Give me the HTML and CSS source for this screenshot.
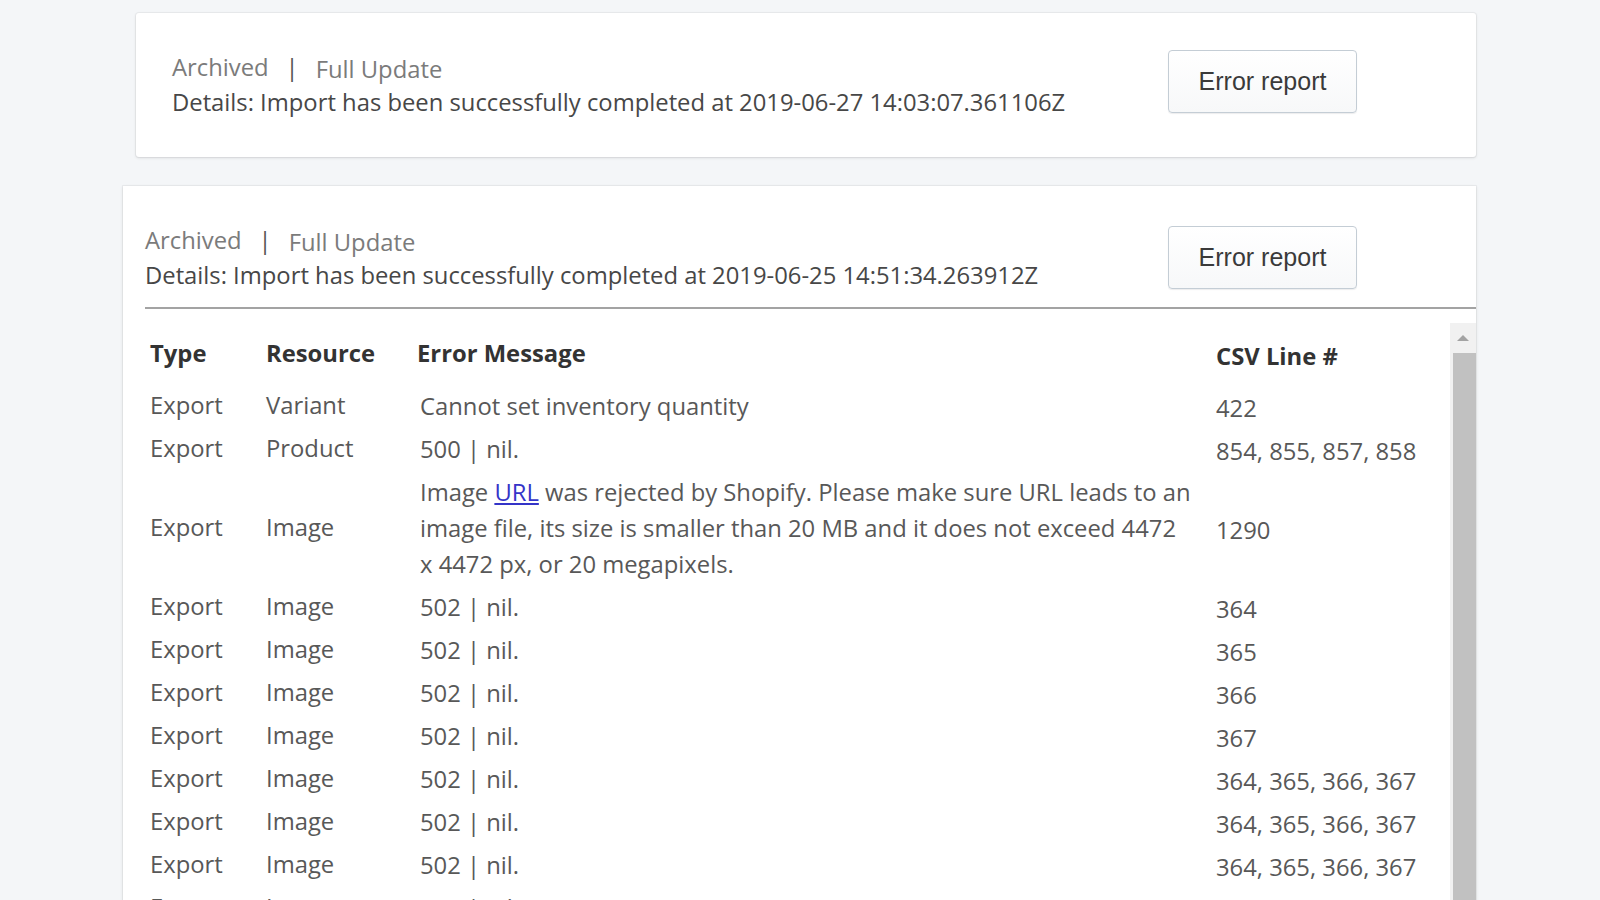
FILE: index.html
```html
<!DOCTYPE html>
<html lang="en">
<head>
<meta charset="utf-8">
<title>Import history</title>
<link rel="stylesheet" href="styles.css">
</head>
<body>
<div class="page">
  <section class="card card-first">
    <div class="summary-text">
      <div class="meta"><span>Archived</span><span class="sep">|</span><span class="meta-type">Full Update</span></div>
      <div class="details">Details: Import has been successfully completed at 2019-06-27 14:03:07.361106Z</div>
    </div>
    <button class="btn">Error report</button>
  </section>

  <section class="card card-second">
    <div class="summary">
      <div class="summary-text">
        <div class="meta"><span>Archived</span><span class="sep">|</span><span class="meta-type">Full Update</span></div>
        <div class="details">Details: Import has been successfully completed at 2019-06-25 14:51:34.263912Z</div>
      </div>
      <button class="btn btn-second">Error report</button>
    </div>
    <div class="divider"></div>
    <div class="scroll">
      <div class="table-wrap">
        <table class="errors">
          <colgroup>
            <col class="c-type"><col class="c-res"><col class="c-msg"><col class="c-csv">
          </colgroup>
          <thead>
            <tr><th>Type</th><th>Resource</th><th>Error Message</th><th class="csv">CSV Line #</th></tr>
          </thead>
          <tbody>
            <tr><td>Export</td><td>Variant</td><td class="msg">Cannot set inventory quantity</td><td class="csv">422</td></tr>
            <tr><td>Export</td><td>Product</td><td class="msg">500 | nil.</td><td class="csv">854, 855, 857, 858</td></tr>
            <tr><td>Export</td><td>Image</td><td class="msg">Image <a href="#">URL</a> was rejected by Shopify. Please make sure URL leads to an<br>image file, its size is smaller than 20 MB and it does not exceed 4472<br>x 4472 px, or 20 megapixels.</td><td class="csv">1290</td></tr>
            <tr><td>Export</td><td>Image</td><td class="msg">502 | nil.</td><td class="csv">364</td></tr>
            <tr><td>Export</td><td>Image</td><td class="msg">502 | nil.</td><td class="csv">365</td></tr>
            <tr><td>Export</td><td>Image</td><td class="msg">502 | nil.</td><td class="csv">366</td></tr>
            <tr><td>Export</td><td>Image</td><td class="msg">502 | nil.</td><td class="csv">367</td></tr>
            <tr><td>Export</td><td>Image</td><td class="msg">502 | nil.</td><td class="csv">364, 365, 366, 367</td></tr>
            <tr><td>Export</td><td>Image</td><td class="msg">502 | nil.</td><td class="csv">364, 365, 366, 367</td></tr>
            <tr><td>Export</td><td>Image</td><td class="msg">502 | nil.</td><td class="csv">364, 365, 366, 367</td></tr>
            <tr><td>Export</td><td>Image</td><td class="msg">502 | nil.</td><td class="csv">364, 365, 366, 367</td></tr>
            <tr><td>Export</td><td>Image</td><td class="msg">502 | nil.</td><td class="csv">364, 365, 366, 367</td></tr>
          </tbody>
        </table>
      </div>
      <div class="scrollbar">
        <div class="sb-up"><span class="sb-arrow"></span></div>
        <div class="sb-thumb"></div>
      </div>
    </div>
  </section>
</div>
</body>
</html>
```

FILE: styles.css
```css
html, body {
  margin: 0;
  padding: 0;
  height: 100%;
  overflow: hidden;
}

body {
  background: #f4f6f8;
  font-family: "Open Sans", "Noto Sans", sans-serif;
  font-size: 23.8px;
  color: #474747;
}

.page {
  padding-top: 13px;
}

.card {
  background: #ffffff;
  border-radius: 3px;
  box-shadow: 0 0 0 1px rgba(63, 63, 68, 0.05), 0 1px 3px 0 rgba(63, 63, 68, 0.15);
  box-sizing: border-box;
}

.card-first {
  margin-left: 136px;
  width: 1340px;
  height: 144px;
  padding: 37px 119px 0 36px;
  display: flex;
  justify-content: space-between;
  align-items: flex-start;
}

.card-second {
  margin-top: 29px;
  margin-left: 123px;
  width: 1353px;
  height: 760px;
  padding-top: 37px;
  border-radius: 0;
}

.summary {
  display: flex;
  justify-content: space-between;
  align-items: flex-start;
  padding-left: 22px;
  padding-right: 119px;
}

.summary-text {
  line-height: 35px;
  white-space: nowrap;
}

.meta {
  color: #7b7b7b;
}

.sep {
  margin: 0 17px;
  color: #555;
}

.meta-type {
  position: relative;
  top: 2px;
}

.details {
  color: #474747;
}

.btn {
  width: 189px;
  height: 63px;
  box-sizing: border-box;
  border: 1px solid #c4cdd5;
  border-radius: 4px;
  background: linear-gradient(#ffffff, #f7f8f9);
  box-shadow: 0 1px 1px rgba(22, 29, 37, 0.08);
  font-family: "Liberation Sans", Arial, sans-serif;
  font-size: 25px;
  color: #3a3a3a;
  padding: 0;
  flex-shrink: 0;
}

.btn-second {
  margin-top: 3px;
}

.divider {
  margin: 14px 0 0 22px;
  height: 2px;
  background: #a3a3a3;
}

.scroll {
  margin: 14px 0 0 22px;
  height: 600px;
  display: flex;
}

.table-wrap {
  flex: 1;
  overflow: hidden;
}

.errors {
  width: 1305px;
  table-layout: fixed;
  border-collapse: collapse;
  line-height: 36px;
}

.c-type { width: 116px; }
.c-res { width: 151px; }
.c-msg { width: 799px; }
.c-csv { width: 239px; }

.errors th {
  text-align: left;
  font-weight: 700;
  color: #333333;
  padding: 12px 0 13px 5px;
  vertical-align: middle;
}

.errors th.csv {
  padding-top: 15px;
  padding-bottom: 10px;
}

.errors td {
  color: #585858;
  padding: 3px 0 4px 5px;
  vertical-align: middle;
  white-space: nowrap;
}

.errors td.msg {
  padding-left: 8px;
  padding-top: 4px;
  padding-bottom: 3px;
}

.errors td.csv {
  padding-top: 6px;
  padding-bottom: 1px;
}

.errors a {
  color: #3434c8;
  text-decoration: underline;
}

.scrollbar {
  width: 26px;
  background: #f1f1f1;
  display: flex;
  flex-direction: column;
}

.sb-up {
  height: 30px;
  display: flex;
  align-items: center;
  justify-content: center;
}

.sb-arrow {
  width: 0;
  height: 0;
  border-left: 6px solid transparent;
  border-right: 6px solid transparent;
  border-bottom: 6px solid #a3a3a3;
}

.sb-thumb {
  flex: 1;
  margin-left: 3px;
  background: #c1c1c1;
}
```
